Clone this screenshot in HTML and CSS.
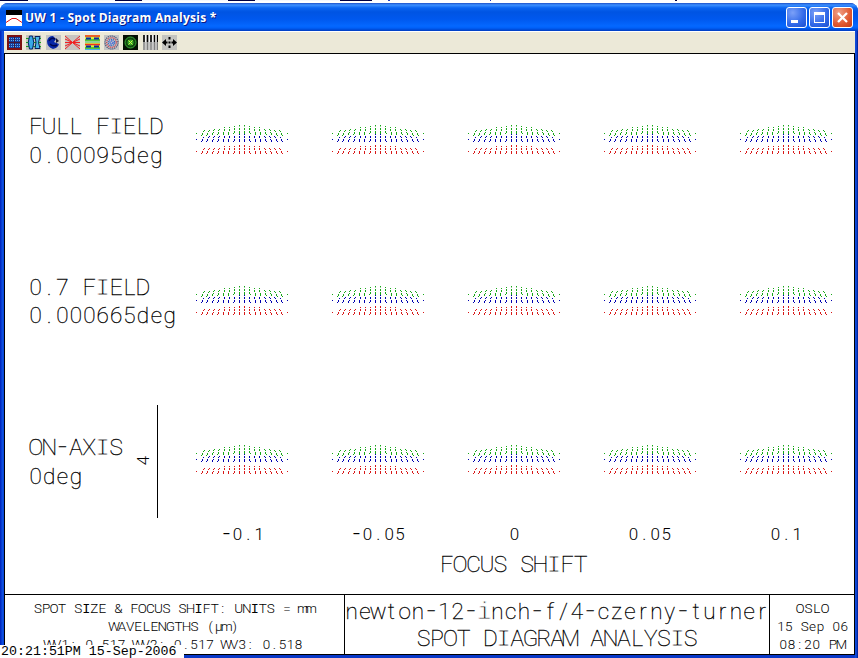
FILE: index.html
```html
<!DOCTYPE html>
<html lang="en">
  <head>
    <meta charset="UTF-8" />
    <title>UW 1 - Spot Diagram Analysis *</title>
    <link rel="stylesheet" href="styles.css">
  </head>
  <body>
    <div class="desktop-strip"></div>
    <div class="window">
      <div class="titlebar">
        <svg class="app-icon" width="16" height="16" viewBox="0 0 16 16">
          <rect width="16" height="16" fill="#fff" />
          <rect width="16" height="5" fill="#000" />
          <path d="M0 12.500L3 10.500L6 8.500H10L13 10.500L16 12.500" fill="none" stroke="#e01010" />
        </svg>
        <span class="title">UW 1 - Spot Diagram Analysis *</span>
        <div class="buttons">
          <div class="btn"><svg width="19" height="19"><rect x="4" y="12" width="7" height="3" fill="#fff" /></svg></div>
          <div class="btn"><svg width="19" height="19"><path d="M4 4h11v11h-11zM5 7v7h9v-7z" fill="#fff" fill-rule="evenodd" /></svg></div>
          <div class="btn close"><svg width="19" height="19"><path d="M5 5L14 14M14 5L5 14" stroke="#fff" stroke-width="2.300" /></svg></div>
        </div>
      </div>

      <div class="toolbar">
        <!-- spot matrix -->
        <svg class="tool" viewBox="0 0 15 15"><rect width="15" height="15" fill="#7c1010" /><path d="M2 2h11v11h-11z" fill="#183c98" /><path d="M2 3.500h5M8 3.500h5M2 5.500h5M8 5.500h5M2 9.500h5M8 9.500h5M2 11.500h5M8 11.500h5" stroke="#58b0f8" stroke-dasharray="1 1" /><path d="M7.500 2v11M2 7.500h11" stroke="#401838" /></svg>
        <!-- lens -->
        <svg class="tool" viewBox="0 0 15 15"><rect width="15" height="15" fill="#c4c4bc" /><path d="M0 3.500h15M0 7.500h15M0 11.500h15" stroke="#18a018" /><path d="M3.500 1h3Q9 7.500 6.500 14h-3Q1 7.500 3.500 1z" fill="#38a8e8" stroke="#062060" /><path d="M9 1.500h5Q11 7.500 14 13.500H9Q11 7.500 9 1.500z" fill="#48b8e8" stroke="#062060" /></svg>
        <!-- surface -->
        <svg class="tool" viewBox="0 0 15 15"><rect width="15" height="15" fill="#c4c4c4" /><path d="M1 6Q2 1 7 1L10 4L8 7L13 9Q12 13 7 14Q1 12 1 6z" fill="#0828a8" /><path d="M3 6Q5 2 9 4M4 9Q7 12 11 10" fill="none" stroke="#000850" stroke-width="1.500" /><path d="M10 3l3 3-3 2z" fill="#181830" /></svg>
        <!-- ray fan -->
        <svg class="tool" viewBox="0 0 15 15"><rect width="15" height="15" fill="#c8c4c0" /><path d="M0 1L15 14M0 14L15 1M0 4L15 11M0 11L15 4M0 7.500H15" stroke="#f02020" /></svg>
        <!-- fringes -->
        <svg class="tool" viewBox="0 0 15 15"><rect width="15" height="15" fill="#d8f040" /><path d="M0 1h15M0 9.500h15" stroke="#f03020" stroke-width="1.500" /><path d="M0 5h15M0 13h15" stroke="#28b838" stroke-width="1.500" /><path d="M1 3.500h5M9 3.500h5M1 11.500h5M9 11.500h5" stroke="#0828a0" stroke-width="2" /><path d="M0 7h15M0 14.500h15" stroke="#48b0e8" /></svg>
        <!-- psf -->
        <svg class="tool" viewBox="0 0 15 15"><rect width="15" height="15" fill="#c4c4c4" /><g fill="none" stroke-width="1.300" stroke-dasharray="1.200 0.800"><circle cx="7.500" cy="7.500" r="6.500" stroke="#505878" /><circle cx="7.500" cy="7.500" r="4.800" stroke="#c84858" /><circle cx="7.500" cy="7.500" r="3.200" stroke="#3068c0" /><circle cx="7.500" cy="7.500" r="1.500" stroke="#2858e0" /></g></svg>
        <!-- energy -->
        <svg class="tool" viewBox="0 0 15 15"><rect width="15" height="15" fill="#051005" /><circle cx="7.500" cy="7.500" r="5.500" fill="#104810" stroke="#38a838" /><circle cx="7.500" cy="7.500" r="3" fill="#38a828" /><path d="M5.500 5.500l4 4M9.500 5.500l-4 4" stroke="#d0f850" /></svg>
        <!-- mtf bars -->
        <svg class="tool" viewBox="0 0 15 15"><rect width="15" height="15" fill="#c8c8c8" /><path d="M1 0v7M4.500 0v7M8 0v7M11.500 0v7M14.500 0v7" stroke="#000" stroke-width="1.600" /><path d="M2.700 0v7M6.300 0v7M9.800 0v7M13 0v7" stroke="#fff" /><path d="M1 7v8M4.500 7v8M8 7v8M11.500 7v8M14.500 7v8" stroke="#808080" stroke-width="1.300" /></svg>
        <!-- through focus -->
        <svg class="tool" viewBox="0 0 15 15"><rect width="15" height="15" fill="#c4c4c0" /><path d="M0 7.500L4 4v7zM15 7.500L11 4v7z" fill="#000" /><path d="M3 7.500h2.500M9.500 7.500h3M7.500 2v2.500M7.500 6.500v2M7.500 10.500v2.500" stroke="#000" stroke-width="2" /></svg>
      </div>

      <div class="client">
        <svg class="plot" width="849" height="540" viewBox="5 54 849 540">
          <g class="lg">
            <text data-x="29" data-pitch="13.4" y="134">FULL FIELD</text>
            <text data-x="29" data-pitch="13.4" y="163">0.00095deg</text>
            <text data-x="29" data-pitch="13.4" y="295">0.7 FIELD</text>
            <text data-x="29" data-pitch="13.4" y="323">0.000665deg</text>
            <text data-x="29" data-pitch="13.4" y="455">ON-AXIS</text>
            <text data-x="29" data-pitch="13.4" y="484">0deg</text>
            <text data-x="440" data-pitch="13.4" y="572">FOCUS SHIFT</text>
          </g>
          <g class="md">
            <text data-x="221" data-pitch="10.9" y="540">-0.1</text>
            <text data-x="351" data-pitch="10.9" y="540">-0.05</text>
            <text data-x="509" data-pitch="10.9" y="540">0</text>
            <text data-x="628" data-pitch="10.9" y="540">0.05</text>
            <text data-x="770" data-pitch="10.9" y="540">0.1</text>
            <text data-x="-5" data-pitch="10.9" y="0" transform="translate(149 461) rotate(-90)">4</text>
          </g>
          <path class="scale" d="M157.500 405V518" />
          <g id="spots"></g>
        </svg>
        <div class="footer">
          <svg class="cell" width="339" height="60" viewBox="5 595 339 60">
            <g class="sm">
              <text data-x="34" data-pitch="8.03" y="613">SPOT SIZE &amp; FOCUS SHIFT: UNITS = mm</text>
              <text data-x="110" data-pitch="8.05" y="631">WAVELENGTHS (μm)</text>
              <text data-x="45" data-pitch="8.05" y="649">WV1: 0.517 WV2: 0.517 WV3: 0.518</text>
            </g>
          </svg>
          <svg class="cell" width="424" height="60" viewBox="345 595 424 60">
            <g class="lg">
              <text data-x="345" data-pitch="13.25" y="619">newton-12-inch-f/4-czerny-turner</text>
              <text data-x="417" data-pitch="13.35" y="646">SPOT DIAGRAM ANALYSIS</text>
            </g>
          </svg>
          <svg class="cell" width="84" height="60" viewBox="770 595 84 60">
            <g class="sm">
              <text data-x="796" data-pitch="8.3" y="613">OSLO</text>
              <text data-x="777" data-pitch="7.9" y="631">15 Sep 06</text>
              <text data-x="779" data-pitch="8.3" y="649">08:20 PM</text>
            </g>
          </svg>
        </div>
      </div>
    </div>
    <div class="timestamp">20:21:51PM 15-Sep-2006</div>
    <script src="plot.js"></script>
  </body>
</html>
```
FILE: styles.css
```css
body {
  margin: 0;
  width: 858px;
  height: 658px;
  overflow: hidden;
  position: relative;
  background: #fff;
}
.desktop-strip {
  height: 3px;
  background: linear-gradient(#0000 1px, #fff 1px), linear-gradient(90deg, #000040 28px, #f4f8ff 28px 115px, #000040 115px 142px, #f4f8ff 142px 228px, #000040 228px 255px, #f4f8ff 255px 340px, #000040 340px 372px, #fff 372px 388px, #2040c0 388px 390px, #fff 390px 490px, #2040c0 490px 491px, #fff 491px 675px, #000040 675px 677px, #fff 677px);
}
.window {
  box-sizing: border-box;
  width: 858px;
  height: 655px;
  padding: 0 3px 2px 4px;
  border-radius: 8px 8px 0 0;
  background: linear-gradient(90deg, #0020b8, #1058e8 3px, #0838c8 4px, #0838c8 854px, #1050e0 856px, #001890);
  overflow: hidden;
}
.titlebar {
  height: 28px;
  margin: 0 -3px 0 -4px;
  padding: 0 5px 0 6px;
  display: flex;
  align-items: center;
  background: linear-gradient(#1c50c8 0, #3c90ff 2px, #0a64f0 5px, #0054e3 9px, #0058ee 16px, #0468ff 23px, #0060f8 25px, #003cc0 28px);
}
.app-icon {
  margin-top: 1px;
}
.title {
  flex: 1;
  margin-left: 3px;
  font: bold 12px "Open Sans", sans-serif;
  letter-spacing: 0.25px;
  color: #fff;
  text-shadow: 1px 1px #0a1883;
  white-space: nowrap;
}
.buttons {
  display: flex;
  gap: 2px;
  margin-top: 1px;
}
.btn {
  width: 19px;
  height: 19px;
  border: 1px solid #fff;
  border-radius: 3px;
  background: radial-gradient(circle at 30% 25%, #7ba0f8, #3068e8 60%, #1c50d0);
}
.btn svg {
  display: block;
}
.close {
  background: radial-gradient(circle at 30% 25%, #f0a088, #e05830 60%, #c03c18);
}
.toolbar {
  box-sizing: border-box;
  height: 23px;
  padding: 3px 3px 0;
  display: flex;
  gap: 4.4px;
  border-top: 1px solid #fff;
  border-bottom: 1px solid #000;
  background: #ece9d8;
}
.tool {
  width: 15px;
  height: 15px;
}
.client {
  box-sizing: border-box;
  width: 851px;
  border-left: 1px solid #000;
  border-right: 1px solid #000;
  background: #fff;
}
.plot,
.cell {
  display: block;
}
.footer {
  display: flex;
  border-top: 1px solid #000;
  border-bottom: 1px solid #000;
  height: 59px;
}
.cell + .cell {
  border-left: 1px solid #000;
}
.lg,
.md,
.sm {
  font-family: Roboto, "Liberation Sans", sans-serif;
  font-weight: 100;
  font-size: 22.5px;
  text-anchor: middle;
}
.lg {
  stroke: #000;
  stroke-width: 0.3px;
}
.md {
  font-weight: 300;
  font-size: 17px;
}
.sm {
  font-weight: 300;
  font-size: 13.5px;
}
.slab {
  font-family: "Liberation Mono", monospace;
}
.dash {
  font-family: Inter, sans-serif;
  font-size: 1.15em;
}
/* the mono face has no light cut, trim its stems */
.lg .slab {
  font-size: 24px;
  stroke: #fff;
  stroke-width: 0.9px;
}
.scale {
  stroke: #000;
  shape-rendering: crispEdges;
}
#spots {
  shape-rendering: crispEdges;
}
.timestamp {
  position: absolute;
  left: 0;
  bottom: 0;
  width: 184px;
  height: 13px;
  padding-left: 1px;
  box-sizing: border-box;
  background: #fff;
  font: 13.3px/13px "Liberation Mono", monospace;
  color: #000;
  white-space: nowrap;
}
```
FILE: plot.js
```js
// fixed pitch lettering: every character is centred in its own cell
document.querySelectorAll("text[data-x]").forEach(function (t) {
  var x = parseFloat(t.dataset.x);
  var pitch = parseFloat(t.dataset.pitch);
  var chars = t.textContent;
  var xs = [];
  for (var i = 0; i < chars.length; i++) {
    xs.push((x + pitch * (i + 0.5)).toFixed(2));
  }
  t.setAttribute("x", xs.join(" "));
  t.innerHTML = t.innerHTML
    .replace(/[Ii]/g, '<tspan class="slab">$&</tspan>')
    .replace(/-/g, '<tspan class="dash">-</tspan>');
});

// spot clusters, one per field and focus position
var bands = [
  { color: "#18a818", base: 136, lift: 2, len: 6 },
  { color: "#0000b0", base: 142, lift: 0, len: 5 },
  { color: "#d81818", base: 154, lift: 0, len: 6 }
];

function cluster(cx, dy) {
  var out = "";
  bands.forEach(function (b) {
    var d = "";
    for (var k = -8.5; k <= 8.5; k++) {
      var a = Math.abs(k) / 8.5;
      var x = cx + k * 5.4;
      var n = a === 1 ? 1 : Math.round(b.len + (1 - a) * 3);
      var base = a === 1 ? b.base - 2 : b.base - Math.round(b.lift * (1 - a));
      for (var j = 0; j < n; j++) {
        if (j === 3 || j === 6) continue;
        var px = Math.round(x - k * 0.07 * j);
        d += "M" + px + " " + (base + dy - j - 0.5) + "h1";
      }
    }
    out += '<path d="' + d + '" stroke="' + b.color + '" fill="none" />';
  });
  // faint outliers above the middle columns
  out += '<path d="M' + (cx - 3) + " " + (dy + 126.5) + "h1M" + (cx + 2) + " " + (dy + 126.5) + 'h1" stroke="#9c9" />';
  return out;
}

var html = "";
[0, 161, 320].forEach(function (dy) {
  [241.5, 377.5, 513.5, 649.5, 785.5].forEach(function (cx) {
    html += cluster(cx, dy);
  });
});
document.getElementById("spots").innerHTML = html;
```
